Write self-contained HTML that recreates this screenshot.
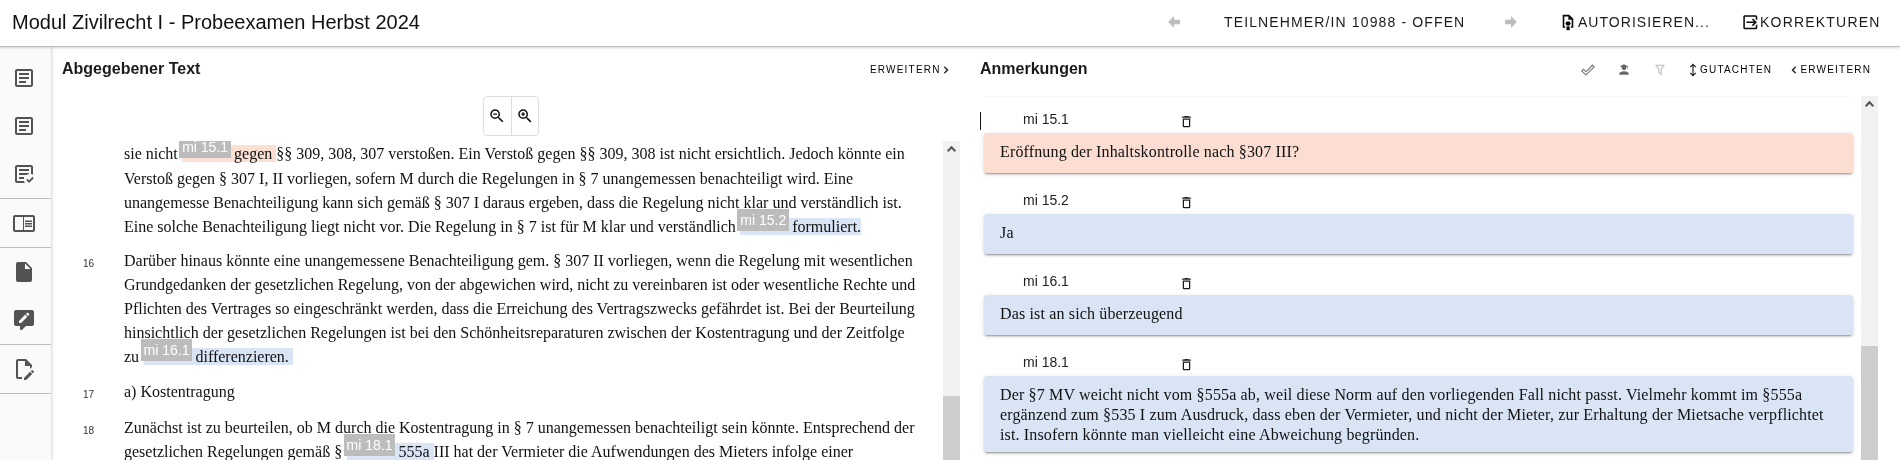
<!DOCTYPE html>
<html lang="de">
<head>
<meta charset="utf-8">
<title>Modul Zivilrecht I - Probeexamen Herbst 2024</title>
<style>
*{box-sizing:border-box;margin:0;padding:0}
html,body{width:1900px;height:460px;overflow:hidden;background:#fff;color:#000;font-family:"Liberation Sans",Arial,sans-serif}
.abs{position:absolute}
#root{position:absolute;left:0;top:0;width:1900px;height:460px;will-change:transform}
svg{display:block}
#hdr{position:absolute;left:0;top:0;width:1900px;height:47px;background:#fff;border-bottom:1px solid #bdbdbd;box-shadow:0 1px 2px rgba(0,0,0,.16);z-index:5}
#title{position:absolute;left:12px;top:10px;font-size:20px;line-height:24px;white-space:nowrap;color:#111}
.btn{position:absolute;white-space:nowrap;text-transform:uppercase;color:#1a1a1a}
.hb{font-size:14px;letter-spacing:1.03px;line-height:20px;top:12px}
.sb{font-size:10px;letter-spacing:1.2px;line-height:14px;top:63px;color:#000}
#nav{position:absolute;left:0;top:47px;width:52px;height:413px;background:#fafafa;border-right:1px solid #e2e2e2;box-shadow:1px 0 3px rgba(0,0,0,.08)}
#nav .dv{position:absolute;left:0;width:51px;height:1px;background:#bebebe}
#nav svg{position:absolute;left:12px;width:24px;height:24px;fill:#545252}
.h2{position:absolute;font-weight:bold;font-size:16px;line-height:20px;top:59px;color:#1a1a1a;white-space:nowrap}
#txt{position:absolute;left:124px;top:0;width:810px;font-family:"Liberation Serif","Times New Roman",serif;font-size:16px;line-height:24px;color:#111}
#txt p{position:absolute;left:0;white-space:nowrap}
.ln{position:absolute;left:83px;font-size:10px;line-height:12px;color:#333}
.mk{background:#d9e5f5;margin-left:4.6px}
.mk.r{background:#fadfd3}
.lb{display:inline-block;position:relative;top:-6.9px;margin-left:-3.2px;margin-right:-1px;font-family:"Liberation Sans",Arial,sans-serif;font-size:14px;line-height:22px;height:22px;padding:0 3px;color:#fff;background:#bcbcbc;vertical-align:baseline}
.sbar{position:absolute;background:#f1f1f1}
.sbar i{position:absolute;left:0;width:100%;background:#cdcdcd}
.card{position:absolute;left:984px;width:868.5px;border-radius:3px;background:#d9e5f5;box-shadow:0 3px 1px -2px rgba(0,0,0,.2),0 2px 2px 0 rgba(0,0,0,.14),0 1px 5px 0 rgba(0,0,0,.12);font-family:"Liberation Serif","Times New Roman",serif;font-size:16px;letter-spacing:.15px;line-height:20px;padding:8.5px 16px;color:#111}
.card.r{background:#fbddd2}
.cl{position:absolute;left:1023px;font-size:14px;line-height:16px;color:#222;white-space:nowrap}
.tr{position:absolute;left:1179px;width:15px;height:15px;fill:#1c1c1c}
</style>
</head>
<body>
<div id="root">
<div id="hdr">
  <div id="title">Modul Zivilrecht I - Probeexamen Herbst 2024</div>
  <svg class="abs" style="left:1165px;top:13px;width:18px;height:18px;fill:#bdbdbd" viewBox="0 0 24 24"><path d="M20,9V15H12V19.840L4.160,12L12,4.160V9H20Z"/></svg>
  <div class="btn hb" style="left:1224px;letter-spacing:1.13px">Teilnehmer/in 10988 - offen</div>
  <svg class="abs" style="left:1502px;top:13px;width:18px;height:18px;fill:#bdbdbd" viewBox="0 0 24 24"><path d="M4,15V9H12V4.160L19.840,12L12,19.840V15H4Z"/></svg>
  <svg class="abs" style="left:1562px;top:14px;width:12px;height:17px" viewBox="0 0 12 17"><path d="M3.100,13H1.500V1.600H6.900L10.500,5.200V13H8.900" fill="none" stroke="#0a0a0a" stroke-width="1.600"/><path d="M6.400,1.200V5.700H10.900Z" fill="#0a0a0a"/><polygon points="6.10,7.04 6.94,7.77 8.15,7.76 8.13,8.78 9.00,9.50 8.13,10.22 8.15,11.24 6.94,11.23 6.10,11.96 5.26,11.23 4.05,11.24 4.07,10.22 3.20,9.50 4.07,8.78 4.05,7.76 5.26,7.77" fill="#0a0a0a"/><rect x="4.500" y="12.500" width="3.200" height="3.700" fill="#0a0a0a"/><rect x="5.300" y="11.500" width="1.600" height="1.200" fill="#0a0a0a" opacity=".55"/></svg>
  <div class="btn hb" style="left:1578px">Autorisieren...</div>
  <svg class="abs" style="left:1740.700px;top:12.500px;width:18.600px;height:18.600px;fill:#0a0a0a" viewBox="0 0 24 24"><path d="M14.080,15.590L16.670,13H7V11H16.670L14.080,8.410L15.500,7L20.500,12L15.500,17L14.080,15.590M19,3A2,2 0 0,1 21,5V9.670L19,7.670V5H5V19H19V16.330L21,14.330V19A2,2 0 0,1 19,21H5C3.890,21 3,20.100 3,19V5C3,3.890 3.890,3 5,3H19Z"/></svg>
  <div class="btn hb" style="left:1760px;letter-spacing:1.2px">Korrekturen</div>
</div>

<div id="nav">
  <svg style="top:19px" viewBox="0 0 24 24"><path d="M5,3C3.89,3 3,3.89 3,5V19C3,20.11 3.89,21 5,21H19C20.11,21 21,20.11 21,19V5C21,3.89 20.11,3 19,3H5M5,5H19V19H5V5M7,7V9H17V7H7M7,11V13H17V11H7M7,15V17H14V15H7Z"/></svg>
  <svg style="top:67px" viewBox="0 0 24 24"><path d="M5,3C3.89,3 3,3.89 3,5V19C3,20.11 3.89,21 5,21H19C20.11,21 21,20.11 21,19V5C21,3.89 20.11,3 19,3H5M5,5H19V19H5V5M7,7V9H17V7H7M7,11V13H17V11H7M7,15V17H14V15H7Z"/></svg>
  <svg style="top:115px" viewBox="0 0 24 24"><path d="M17,21L14.25,18L15.41,16.84L17,18.43L20.59,14.84L21.75,16.25M12.8,21H5C3.89,21 3,20.11 3,19V5C3,3.89 3.89,3 5,3H19C20.11,3 21,3.89 21,5V12.8C20.39,12.45 19.72,12.2 19,12.08V5H5V19H12.08C12.2,19.72 12.45,20.39 12.8,21M12,17H7V15H12M14.68,13H7V11H17V12.08C16.15,12.22 15.37,12.54 14.68,13M17,9H7V7H17"/></svg>
  <div class="dv" style="top:151px"></div>
  <svg style="top:164px" viewBox="0 0 24 24"><path d="M13 12h7v1.5h-7zm0-2.500h7V11h-7zm0 5h7V16h-7zM21 4H3c-1.100 0-2 .9-2 2v13c0 1.100.9 2 2 2h18c1.100 0 2-.9 2-2V6c0-1.100-.9-2-2-2zm0 15h-9V6h9v13zM3 6h8v13H3z" fill-rule="evenodd"/></svg>
  <div class="dv" style="top:200px"></div>
  <svg style="top:213px" viewBox="0 0 24 24"><path d="M13,9V3.500L18.500,9M6,2C4.890,2 4,2.890 4,4V20A2,2 0 0,0 6,22H18A2,2 0 0,0 20,20V8L14,2H6Z"/></svg>
  <svg style="top:261px" viewBox="0 0 24 24"><path d="M20 2H4C2.900 2 2 2.900 2 4V16C2 17.100 2.900 18 4 18H8V21C8 21.600 8.400 22 9 22H9.500C9.700 22 10 21.900 10.200 21.700L13.900 18H20C21.100 18 22 17.100 22 16V4C22 2.900 21.100 2 20 2M9.100 15H7V12.900L13.300 6.600L15.400 8.700L9.100 15M17.200 6.900L16.100 8L14 5.900L15.100 4.800C15.300 4.600 15.700 4.600 15.900 4.800L17.200 6.100C17.400 6.300 17.400 6.700 17.200 6.900Z" fill-rule="evenodd"/></svg>
  <div class="dv" style="top:297px"></div>
  <svg style="top:310px" viewBox="0 0 24 24"><path d="M10 20H6V4H13V9H18V12.100L20 10.100V8L14 2H6C4.900 2 4 2.900 4 4V20C4 21.100 4.900 22 6 22H10V20M20.200 13C20.300 13 20.500 13.100 20.600 13.200L21.900 14.500C22.100 14.700 22.100 15.100 21.900 15.300L20.900 16.300L18.800 14.200L19.800 13.200C19.900 13.100 20 13 20.200 13M20.200 16.900L14.100 23H12V20.900L18.100 14.800L20.200 16.900Z"/></svg>
  <div class="dv" style="top:346px"></div>
</div>

<div class="h2" style="left:62px">Abgegebener Text</div>
<div class="btn sb" style="left:870px">Erweitern</div>
<svg class="abs" style="left:939px;top:63px;width:14px;height:14px;fill:#111;stroke:#111;stroke-width:.4" viewBox="0 0 24 24"><path d="M8.590,16.580L13.170,12L8.590,7.410L10,6L16,12L10,18L8.590,16.580Z"/></svg>

<div class="abs" style="left:483px;top:96px;width:56px;height:40px;border:1px solid #dedede;border-radius:4px;background:#fff;z-index:3">
  <div class="abs" style="left:26.5px;top:0;width:1px;height:38px;background:#dedede"></div>
  <svg class="abs" style="left:4px;top:10px;width:18px;height:18px;fill:#111" viewBox="0 0 24 24"><path d="M15.500,14H14.710L14.430,13.730C15.410,12.590 16,11.110 16,9.500A6.500,6.500 0 0,0 9.500,3A6.500,6.500 0 0,0 3,9.500A6.500,6.500 0 0,0 9.500,16C11.110,16 12.590,15.410 13.730,14.430L14,14.710V15.500L19,20.490L20.490,19L15.500,14M9.500,14C7,14 5,12 5,9.500C5,7 7,5 9.500,5C12,5 14,7 14,9.500C14,12 12,14 9.500,14M7,8.600H12V10.400H7V8.600Z"/></svg>
  <svg class="abs" style="left:31.5px;top:10px;width:18px;height:18px;fill:#111" viewBox="0 0 24 24"><path d="M15.500,14L20.500,19L19,20.500L14,15.500V14.710L13.730,14.430C12.590,15.410 11.110,16 9.500,16A6.500,6.500 0 0,1 3,9.500A6.500,6.500 0 0,1 9.500,3A6.500,6.500 0 0,1 16,9.500C16,11.110 15.410,12.590 14.430,13.730L14.710,14H15.500M9.500,14C12,14 14,12 14,9.500C14,7 12,5 9.500,5C7,5 5,7 5,9.500C5,12 7,14 9.500,14M12,10.400H10.400V12H8.600V10.400H7V8.600H8.600V7H10.400V8.600H12V10.400Z"/></svg>
</div>

<div class="abs" style="left:60px;top:100px;width:880px;height:41px;background:#fff;z-index:2"></div>
<div id="txt">
  <p style="top:142px">sie nicht<span class="mk r"><span class="lb">mi 15.1</span> gegen </span>§§ 309, 308, 307 verstoßen. Ein Verstoß gegen §§ 309, 308 ist nicht ersichtlich. Jedoch könnte ein</p>
  <p style="top:167px">Verstoß gegen § 307 I, II vorliegen, sofern M durch die Regelungen in § 7 unangemessen benachteiligt wird. Eine</p>
  <p style="top:191px">unangemesse Benachteiligung kann sich gemäß § 307 I daraus ergeben, dass die Regelung nicht klar und verständlich ist.</p>
  <p style="top:215px">Eine solche Benachteiligung liegt nicht vor. Die Regelung in § 7 ist für M klar und verständlich<span class="mk"><span class="lb">mi 15.2</span> formuliert.</span></p>
  <p style="top:249px">Darüber hinaus könnte eine unangemessene Benachteiligung gem. § 307 II vorliegen, wenn die Regelung mit wesentlichen</p>
  <p style="top:273px">Grundgedanken der gesetzlichen Regelung, von der abgewichen wird, nicht zu vereinbaren ist oder wesentliche Rechte und</p>
  <p style="top:297px">Pflichten des Vertrages so eingeschränkt werden, dass die Erreichung des Vertragszwecks gefährdet ist. Bei der Beurteilung</p>
  <p style="top:321px">hinsichtlich der gesetzlichen Regelungen ist bei den Schönheitsreparaturen zwischen der Kostentragung und der Zeitfolge</p>
  <p style="top:345px">zu<span class="mk"><span class="lb">mi 16.1</span> differenzieren.&nbsp;</span></p>
  <p style="top:380px">a) Kostentragung</p>
  <p style="top:416px">Zunächst ist zu beurteilen, ob M durch die Kostentragung in § 7 unangemessen benachteiligt sein könnte. Entsprechend der</p>
  <p style="top:440px">gesetzlichen Regelungen gemäß §<span class="mk"><span class="lb">mi 18.1</span> 555a </span>III hat der Vermieter die Aufwendungen des Mieters infolge einer</p>
</div>
<div class="ln" style="top:258px">16</div>
<div class="ln" style="top:389px">17</div>
<div class="ln" style="top:425px">18</div>

<div class="sbar" style="left:943px;top:141px;width:17px;height:319px"><i style="top:255px;height:64px"></i>
  <svg class="abs" style="left:0;top:0;width:17px;height:17px" viewBox="0 0 17 17"><path d="M4.700,10.300L8.500,6.300L12.300,10.300" fill="none" stroke="#555" stroke-width="2"/></svg>
</div>

<div class="h2" style="left:980px">Anmerkungen</div>
<svg class="abs" style="left:1581px;top:63px;width:14px;height:14px;fill:#777" viewBox="0 0 24 24"><path d="M19.780,2.200L24,6.420L8.440,22L0,13.550L4.220,9.330L8.440,13.550L19.780,2.200M19.780,5L8.440,16.360L4.220,12.190L2.810,13.550L8.440,19.170L21.190,6.420L19.780,5Z"/></svg>
<svg class="abs" style="left:1617px;top:63px;width:14px;height:14px;fill:#666" viewBox="0 0 24 24"><path d="M16 8C16 10.210 14.210 12 12 12C9.790 12 8 10.210 8 8L8.110 7.060L5 5.500L12 2L19 5.500V10.500H18V6L15.890 7.060L16 8M12 14C16.420 14 20 15.790 20 18V20H4V18C4 15.790 7.580 14 12 14Z"/></svg>
<svg class="abs" style="left:1653px;top:63px;width:14px;height:14px;fill:#c4c4c4" viewBox="0 0 24 24"><path d="M15,19.880C15.040,20.180 14.940,20.500 14.710,20.710C14.320,21.100 13.690,21.100 13.300,20.710L9.290,16.700C9.060,16.470 8.960,16.160 9,15.870V10.750L4.210,4.620C3.870,4.190 3.950,3.560 4.380,3.220C4.570,3.080 4.780,3 5,3V3H19V3C19.220,3 19.430,3.080 19.620,3.220C20.050,3.560 20.130,4.190 19.790,4.620L15,10.750V19.880M7.040,5L11,10.060V15.580L13,17.580V10.050L16.960,5H7.040Z"/></svg>
<svg class="abs" style="left:1686px;top:63px;width:14px;height:14px;fill:#222" viewBox="0 0 24 24"><path d="M17.450,17.550L12,23L6.550,17.550L7.960,16.140L11,19.170V4.830L7.960,7.860L6.550,6.450L12,1L17.450,6.450L16.040,7.860L13,4.830V19.170L16.040,16.140L17.450,17.550Z"/></svg>
<div class="btn sb" style="left:1700px">Gutachten</div>
<svg class="abs" style="left:1786.5px;top:63px;width:14px;height:14px;fill:#111;stroke:#111;stroke-width:.4" viewBox="0 0 24 24"><path d="M15.410,16.580L10.830,12L15.410,7.410L14,6L8,12L14,18L15.410,16.580Z"/></svg>
<div class="btn sb" style="left:1800.5px">Erweitern</div>

<div class="abs" style="left:980px;top:112px;width:1px;height:18px;background:#111"></div>

<div class="cl" style="top:111px">mi 15.1</div>
<svg class="tr" style="top:114px" viewBox="0 0 24 24"><path d="M6,19A2,2 0 0,0 8,21H16A2,2 0 0,0 18,19V7H6V19M8,9H16V19H8V9M15.500,4L14.500,3H9.500L8.500,4H5V6H19V4H15.500Z"/></svg>
<div class="card r" style="top:133px;height:40px">Eröffnung der Inhaltskontrolle nach §307 III?</div>

<div class="cl" style="top:192px">mi 15.2</div>
<svg class="tr" style="top:195px" viewBox="0 0 24 24"><path d="M6,19A2,2 0 0,0 8,21H16A2,2 0 0,0 18,19V7H6V19M8,9H16V19H8V9M15.500,4L14.500,3H9.500L8.500,4H5V6H19V4H15.500Z"/></svg>
<div class="card" style="top:214px;height:40px">Ja</div>

<div class="cl" style="top:273px">mi 16.1</div>
<svg class="tr" style="top:276px" viewBox="0 0 24 24"><path d="M6,19A2,2 0 0,0 8,21H16A2,2 0 0,0 18,19V7H6V19M8,9H16V19H8V9M15.500,4L14.500,3H9.500L8.500,4H5V6H19V4H15.500Z"/></svg>
<div class="card" style="top:295px;height:40px">Das ist an sich überzeugend</div>

<div class="cl" style="top:354px">mi 18.1</div>
<svg class="tr" style="top:357px" viewBox="0 0 24 24"><path d="M6,19A2,2 0 0,0 8,21H16A2,2 0 0,0 18,19V7H6V19M8,9H16V19H8V9M15.500,4L14.500,3H9.500L8.500,4H5V6H19V4H15.500Z"/></svg>
<div class="card" style="top:376px;height:76px">Der §7 MV weicht nicht vom §555a ab, weil diese Norm auf den vorliegenden Fall nicht passt. Vielmehr kommt im §555a<br>ergänzend zum §535 I zum Ausdruck, dass eben der Vermieter, und nicht der Mieter, zur Erhaltung der Mietsache verpflichtet<br>ist. Insofern könnte man vielleicht eine Abweichung begründen.</div>

<div class="sbar" style="left:1861px;top:96px;width:17px;height:364px"><i style="top:250px;height:114px"></i>
  <svg class="abs" style="left:0;top:0;width:17px;height:17px" viewBox="0 0 17 17"><path d="M4.700,10.200L8.500,6.200L12.300,10.200" fill="none" stroke="#555" stroke-width="2"/></svg>
</div>
<div class="abs" style="left:985px;top:96px;width:867px;height:1px;background:#f8f8f8"></div>
</div>
</body>
</html>
